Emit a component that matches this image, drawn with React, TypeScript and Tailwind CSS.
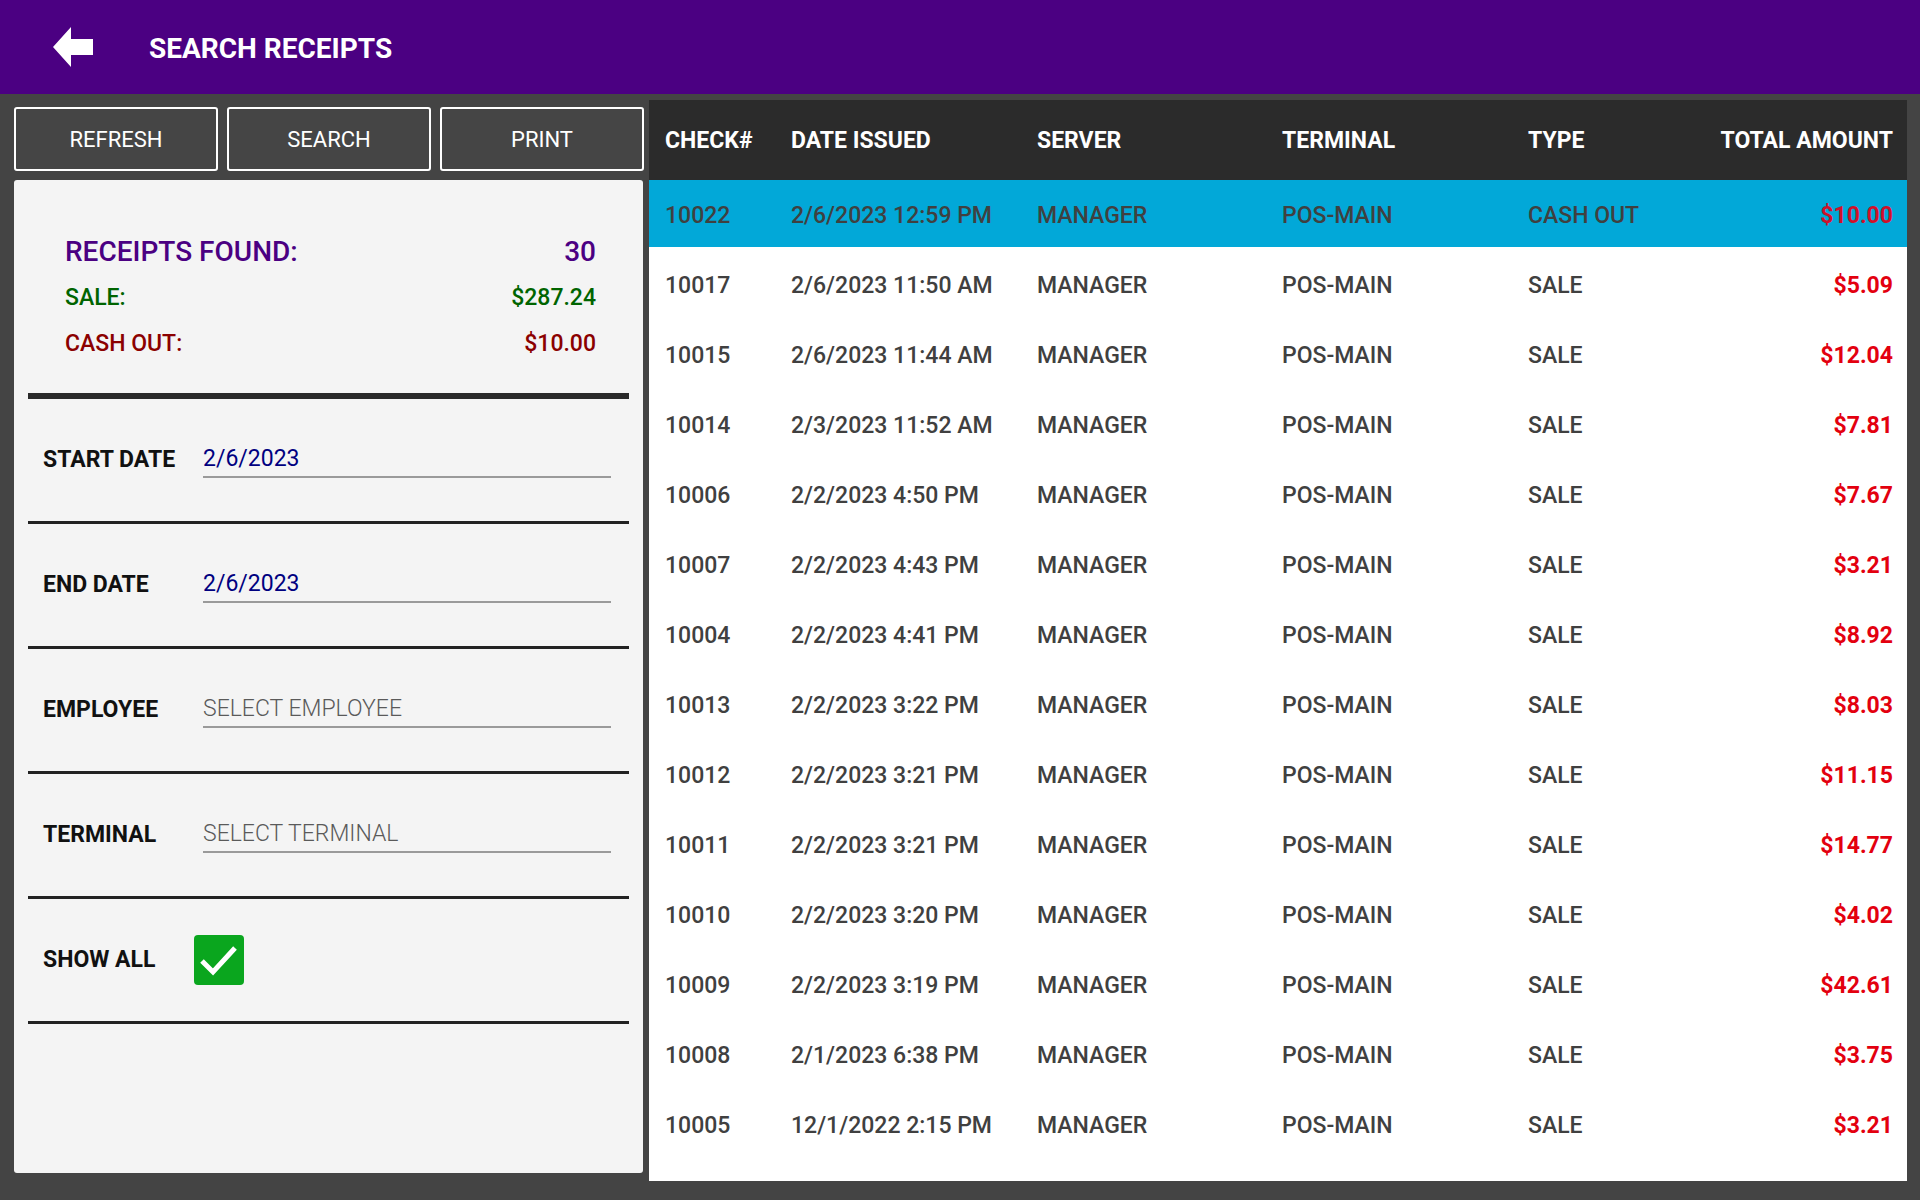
import React from "react";

const rows = [
  ["10022", "2/6/2023 12:59 PM", "CASH OUT", "$10.00"],
  ["10017", "2/6/2023 11:50 AM", "SALE", "$5.09"],
  ["10015", "2/6/2023 11:44 AM", "SALE", "$12.04"],
  ["10014", "2/3/2023 11:52 AM", "SALE", "$7.81"],
  ["10006", "2/2/2023 4:50 PM", "SALE", "$7.67"],
  ["10007", "2/2/2023 4:43 PM", "SALE", "$3.21"],
  ["10004", "2/2/2023 4:41 PM", "SALE", "$8.92"],
  ["10013", "2/2/2023 3:22 PM", "SALE", "$8.03"],
  ["10012", "2/2/2023 3:21 PM", "SALE", "$11.15"],
  ["10011", "2/2/2023 3:21 PM", "SALE", "$14.77"],
  ["10010", "2/2/2023 3:20 PM", "SALE", "$4.02"],
  ["10009", "2/2/2023 3:19 PM", "SALE", "$42.61"],
  ["10008", "2/1/2023 6:38 PM", "SALE", "$3.75"],
  ["10005", "12/1/2022 2:15 PM", "SALE", "$3.21"],
];

function FieldRow({ label, value, placeholder }: { label: string; value?: string; placeholder?: string }) {
  return (
    <div className="h-[122px] flex items-center pl-[15px] pr-[18px]">
      <div className="w-[160px] text-[23px] font-bold text-[#111]">{label}</div>
      <div className="flex-1 mt-[2px] border-b-2 border-[#9a9a9a] pb-[3px] leading-[28px] text-[23px]">
        {value ? (
          <span className="text-[#000080]">{value}</span>
        ) : (
          <span className="text-[#5a5a5a] font-light">{placeholder}</span>
        )}
      </div>
    </div>
  );
}

export default function App() {
  return (
    <div className="w-[1920px] h-[1200px] bg-[#444] flex flex-col overflow-hidden" style={{ fontFamily: "Roboto, 'Noto Sans', sans-serif" }}>
      {/* header */}
      <div className="h-[94px] bg-[#4b0082] flex items-center pl-[53px]">
        <svg width="40" height="40" viewBox="0 0 40 40">
          <polygon points="0,20 18,0 18,12 40,12 40,28 18,28 18,40" fill="#fff" />
        </svg>
        <div className="ml-[56px] mt-[3px] text-white text-[28px] font-bold">SEARCH RECEIPTS</div>
      </div>

      <div className="flex">
        {/* left side */}
        <div className="w-[630px] ml-[14px] mt-[13px] flex flex-col">
          <div className="flex gap-[9px] h-[64px]">
            {["REFRESH", "SEARCH", "PRINT"].map((b) => (
              <button key={b} className="flex-1 border-2 border-white rounded-[3px] bg-[#454545] text-white text-[22px]">
                {b}
              </button>
            ))}
          </div>
          <div className="mt-[9px] h-[993px] w-[629px] bg-[#f4f4f4] rounded-[3px] flex flex-col">
            <div className="pt-[49px] pl-[51px] pr-[47px]">
              <div className="h-[46px] flex items-center justify-between text-[28px] font-medium text-[#4b0082]">
                <span>RECEIPTS FOUND:</span>
                <span>30</span>
              </div>
              <div className="h-[46px] flex items-center justify-between text-[23px] font-medium text-[#006400]">
                <span>SALE:</span>
                <span>$287.24</span>
              </div>
              <div className="h-[46px] flex items-center justify-between text-[23px] font-medium text-[#8b0000]">
                <span>CASH OUT:</span>
                <span>$10.00</span>
              </div>
            </div>
            <div className="mx-[14px] mt-[26px]">
              <div className="h-[6px] bg-[#2a2a2a]" />
              <FieldRow label="START DATE" value="2/6/2023" />
              <div className="h-[3px] bg-[#222]" />
              <FieldRow label="END DATE" value="2/6/2023" />
              <div className="h-[3px] bg-[#222]" />
              <FieldRow label="EMPLOYEE" placeholder="SELECT EMPLOYEE" />
              <div className="h-[3px] bg-[#222]" />
              <FieldRow label="TERMINAL" placeholder="SELECT TERMINAL" />
              <div className="h-[3px] bg-[#222]" />
              <div className="h-[122px] flex items-center pl-[15px]">
                <div className="w-[151px] text-[23px] font-bold text-[#111]">SHOW ALL</div>
                <div className="w-[50px] h-[50px] rounded-[4px] bg-[#0aa61e] flex items-center justify-center">
                  <svg width="50" height="50" viewBox="0 0 50 50">
                    <polyline points="8,26 19,37 41,13" fill="none" stroke="#fff" strokeWidth="5" />
                  </svg>
                </div>
              </div>
              <div className="h-[3px] bg-[#222]" />
            </div>
          </div>
        </div>

        {/* table */}
        <div className="ml-[5px] mt-[6px] w-[1258px] h-[1081px] bg-white flex flex-col overflow-hidden">
          <div className="h-[80px] pt-[3px] bg-[#2b2b2b] grid grid-cols-[126px_246px_245px_246px_245px_minmax(0,1fr)] items-center text-white text-[23px] font-bold whitespace-nowrap">
            <div className="pl-[16px]">CHECK#</div>
            <div className="pl-[16px]">DATE ISSUED</div>
            <div className="pl-[16px]">SERVER</div>
            <div className="pl-[16px]">TERMINAL</div>
            <div className="pl-[16px]">TYPE</div>
            <div className="pr-[14px] min-w-0 flex justify-end">
              <span className="shrink-0">TOTAL AMOUNT</span>
            </div>
          </div>
          {rows.map((r, i) => (
            <div
              key={r[0]}
              className={
                "h-[70px] pt-[5px] grid grid-cols-[126px_246px_245px_246px_245px_minmax(0,1fr)] items-center text-[23px] font-medium text-[#404040] whitespace-nowrap border-b-[3px] border-transparent bg-clip-padding " +
                (i === 0 ? "bg-[#02a8d8]" : "bg-white")
              }
            >
              <div className="pl-[16px]">{r[0]}</div>
              <div className="pl-[16px]">{r[1]}</div>
              <div className="pl-[16px]">MANAGER</div>
              <div className="pl-[16px]">POS-MAIN</div>
              <div className="pl-[16px]">{r[2]}</div>
              <div className={"pr-[14px] text-right font-bold " + (i === 0 ? "text-[#d0102a]" : "text-[#e3000f]")}>{r[3]}</div>
            </div>
          ))}
        </div>
      </div>
    </div>
  );
}
